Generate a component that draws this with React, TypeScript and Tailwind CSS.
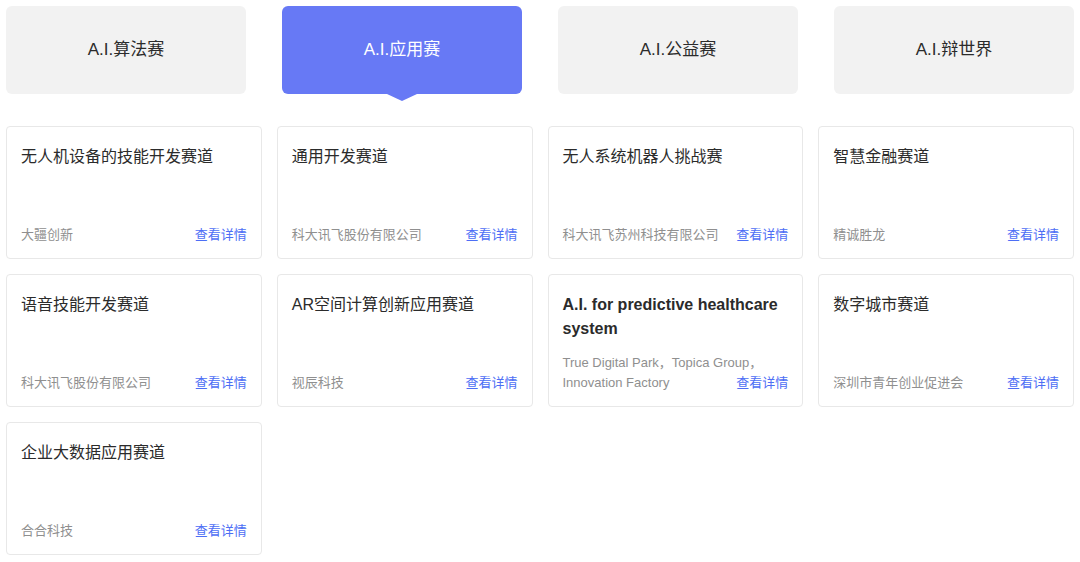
import React from "react";

const tabs = ["A.I.算法赛", "A.I.应用赛", "A.I.公益赛", "A.I.辩世界"];

type Track = { title: string; org: string[]; en?: boolean };

const tracks: Track[] = [
  { title: "无人机设备的技能开发赛道", org: ["大疆创新"] },
  { title: "通用开发赛道", org: ["科大讯飞股份有限公司"] },
  { title: "无人系统机器人挑战赛", org: ["科大讯飞苏州科技有限公司"] },
  { title: "智慧金融赛道", org: ["精诚胜龙"] },
  { title: "语音技能开发赛道", org: ["科大讯飞股份有限公司"] },
  { title: "AR空间计算创新应用赛道", org: ["视辰科技"] },
  {
    title: "A.I. for predictive healthcare system",
    org: ["True Digital Park，Topica Group，", "Innovation Factory"],
    en: true,
  },
  { title: "数字城市赛道", org: ["深圳市青年创业促进会"] },
  { title: "企业大数据应用赛道", org: ["合合科技"] },
];

const App = () => {
  const active = 1;

  return (
    <div
      className="w-[1080px] h-[562px] bg-white overflow-hidden px-[6px] pt-[6px]"
      style={{ fontFamily: '"Liberation Sans", "Noto Sans CJK SC", sans-serif' }}
    >
      {/* Tabs */}
      <div className="flex justify-between">
        {tabs.map((t, i) => (
          <div key={t} className="relative w-[240px]">
            <div
              className={
                i === active
                  ? "h-[88px] rounded-[6px] bg-[#6779f5] text-white flex items-center justify-center text-[17px]"
                  : "h-[88px] rounded-[6px] bg-[#f2f2f2] text-[#2b2b2b] flex items-center justify-center text-[17px]"
              }
            >
              {t}
            </div>
            {i === active && (
              <div className="absolute left-1/2 -translate-x-1/2 top-[88px] w-0 h-0 border-l-[15px] border-r-[15px] border-t-[7px] border-l-transparent border-r-transparent border-t-[#6779f5]"></div>
            )}
          </div>
        ))}
      </div>

      {/* Track cards */}
      <div className="grid grid-cols-4 gap-x-[15px] gap-y-[15px] mt-[32px]">
        {tracks.map((tr) => {
          const last = tr.org[tr.org.length - 1];
          return (
            <div
              key={tr.title}
              className="h-[133px] border border-[#e8e8e8] rounded-[4px] bg-white px-[14px] pt-[18px] pb-[13px] flex flex-col justify-between"
            >
              <div
                className={
                  tr.en
                    ? "text-[16px] leading-[24px] text-[#2b2b2b] font-semibold"
                    : "text-[16px] leading-[24px] text-[#2b2b2b]"
                }
              >
                {tr.title}
              </div>
              <div className="text-[13px] leading-[20px]">
                {tr.org.slice(0, -1).map((line) => (
                  <div key={line} className="text-[#8f8f8f] whitespace-nowrap">
                    {line}
                  </div>
                ))}
                <div className="flex items-end justify-between gap-2">
                  <span className="text-[#8f8f8f]">{last}</span>
                  <span className="text-[#4d6ef5] shrink-0">查看详情</span>
                </div>
              </div>
            </div>
          );
        })}
      </div>
    </div>
  );
};

export default App;
